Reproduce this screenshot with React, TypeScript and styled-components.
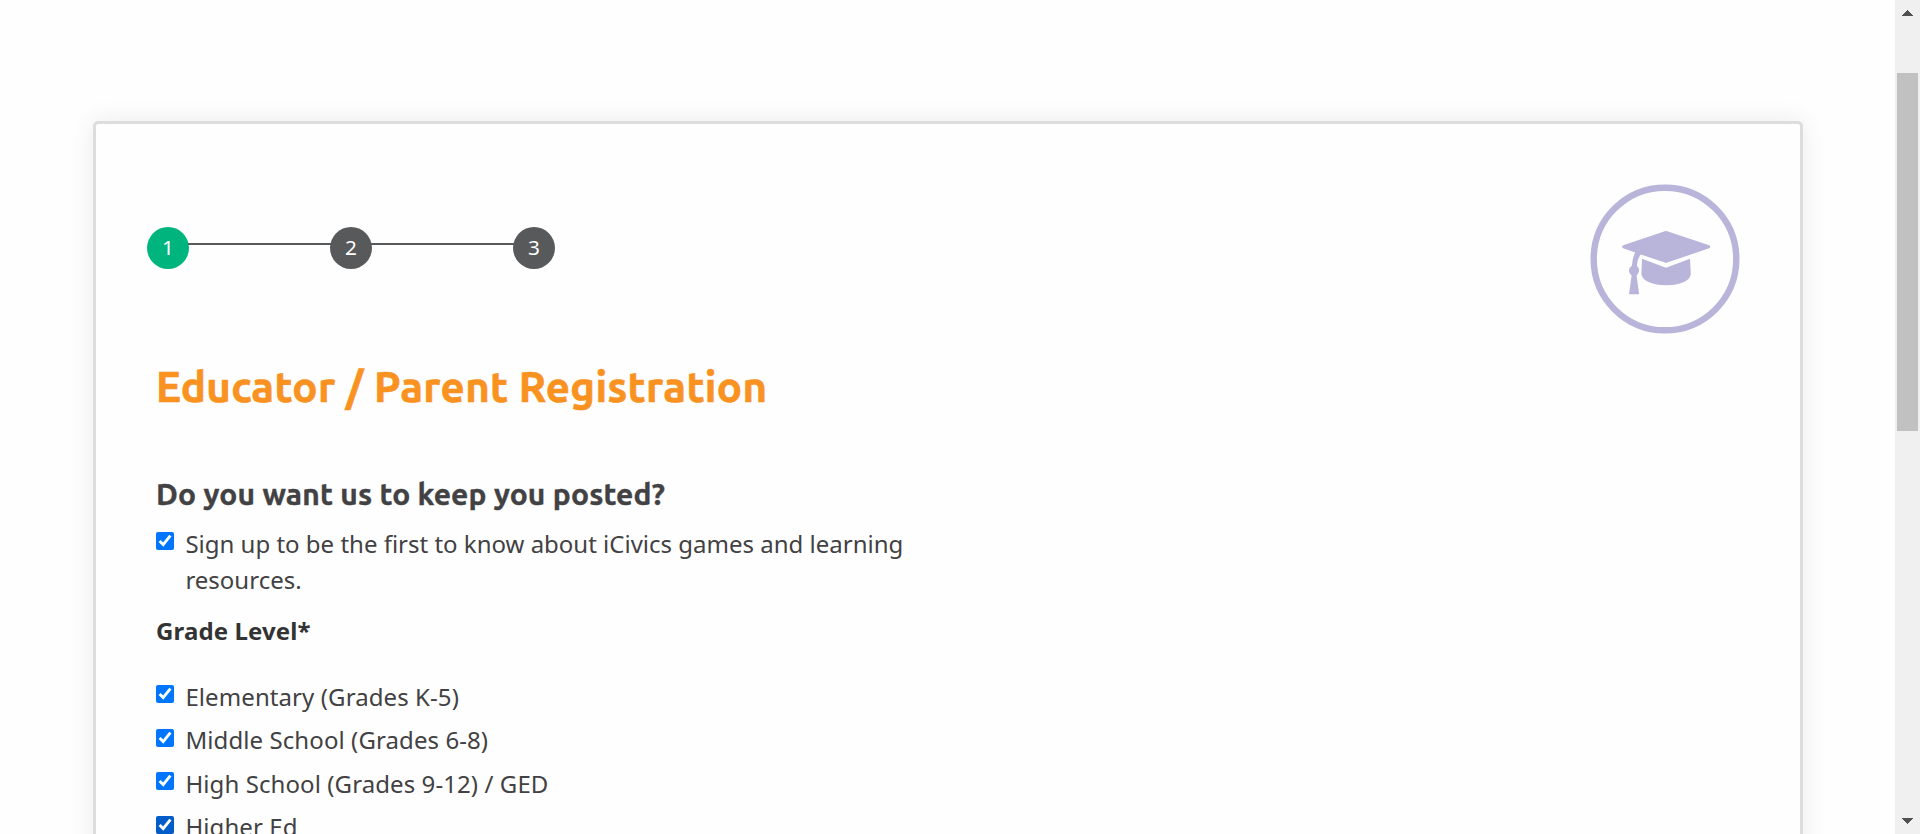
import React from "react";
import styled, { createGlobalStyle } from "styled-components";

const GlobalStyle = createGlobalStyle`
  *, *::before, *::after { box-sizing: border-box; }
  body { margin: 0; background: #fff; overflow: hidden; }
`;

const Viewport = styled.div`
  display: flex;
  height: 834px;
  overflow: hidden;
  background: #fefefe;
  color: #424143;
  font-family: "Noto Sans", sans-serif;
  font-size: 24px;
  line-height: 36px;
`;

const Page = styled.main`
  flex: 1;
  padding: 121px 92px 0 93px;
`;

const Card = styled.section`
  height: 900px;
  padding: 60px 60px 0;
  border: 3px solid #ddd;
  border-radius: 5px;
  background: #fefefe;
  box-shadow: 0 0 26px rgba(0, 0, 0, 0.08);
`;

const CardHeader = styled.header`
  display: flex;
  justify-content: space-between;
  height: 150px;
`;

const Steps = styled.ol`
  display: flex;
  margin: 43px 0 0 -9px;
  padding: 0;
  list-style: none;
`;

const Step = styled.li`
  display: flex;
`;

const StepDot = styled.span<{ $active?: boolean }>`
  width: 42px;
  height: 42px;
  border-radius: 50%;
  background: ${(p) => (p.$active ? "#00b47d" : "#58595b")};
  color: #fff;
  font-size: 20.8px;
  line-height: 40px;
  text-align: center;
`;

const StepLine = styled.span`
  width: 143px;
  height: 2px;
  margin: 16px -1px 0;
  background: #58595b;
`;

const Badge = styled.svg`
  width: 150px;
  height: 150px;
`;

const Title = styled.h1`
  margin: 26px 0 0;
  color: #f99221;
  font-family: Ubuntu, "Noto Sans", sans-serif;
  font-size: 42px;
  font-weight: 700;
  line-height: 54px;
  letter-spacing: 0.33px;
  -webkit-text-stroke: 0.6px currentColor;
  white-space: nowrap;
`;

const Subtitle = styled.h2`
  margin: 60px 0 0;
  font-family: Ubuntu, "Noto Sans", sans-serif;
  font-size: 30px;
  font-weight: 700;
  line-height: 40px;
  letter-spacing: 0.15px;
  -webkit-text-stroke: 0.4px currentColor;
  white-space: nowrap;
`;

const Option = styled.label`
  display: flex;
  align-items: flex-start;
  width: 780px;
`;

const OptionText = styled.span`
  flex: 1;
`;

const Checkbox = styled.input<{ $hovered?: boolean }>`
  flex: none;
  width: 18px;
  height: 18px;
  margin: 6px 11.4px 0 0;
  accent-color: ${(p) => (p.$hovered ? "#005cc8" : "#0075ff")};
`;

const Newsletter = styled.div`
  margin-top: 12px;
`;

const FieldLabel = styled.h3`
  margin: 15px 0 0;
  color: #333;
  font-size: 24px;
  font-weight: 700;
  line-height: 36px;
  letter-spacing: 0.13px;
`;

const Grades = styled.div`
  display: flex;
  flex-direction: column;
  gap: 7.5px;
  margin-top: 30px;
  letter-spacing: 0.09px;

  ${OptionText} {
    margin-top: -0.3px;
    margin-bottom: 0.3px;
  }
`;

const Scrollbar = styled.aside`
  display: flex;
  flex-direction: column;
  align-items: center;
  width: 25px;
  padding: 10px 0;
  background: #f0f0f0;
`;

const Arrow = styled.svg`
  display: block;
  flex: none;
  width: 11px;
  height: 6px;
`;

const Thumb = styled.div`
  width: 21px;
  height: 358px;
  margin: 57px 0 auto;
  background: #c1c1c1;
`;

const grades = [
  "Elementary (Grades K-5)",
  "Middle School (Grades 6-8)",
  "High School (Grades 9-12) / GED",
  "Higher Ed",
];

function GraduationBadge() {
  return (
    <Badge viewBox="0 0 150 150" fill="#b9b4da">
      <circle cx="75" cy="75" r="71.3" fill="none" stroke="#b9b4da" strokeWidth="6.4" />
      <path d="M33.2 61.2 74.8 47.3Q76 46.9 77.2 47.3L119.2 61.2Q121.4 62.8 119.2 64.3L77.2 78.6Q76 79 74.8 78.6L50.9 70.4Q47.6 73.5 46.9 81.8Q49.2 83.8 49.1 86.6Q48.8 89.8 46.6 91.4L49.1 110.3H39L41.6 91.4Q39 89.8 38.9 86.6Q38.9 83.8 41.9 81.8Q42.3 73.5 45.2 68.5L33.2 64.3Q31 62.8 33.2 61.2Z" />
      <path d="M52 74.7 76 83.7 100 74.7 100.8 90.5C99.8 97 90 101.2 76.4 101.2C62.5 101.2 52.6 97 51.4 90.5Z" />
    </Badge>
  );
}

function OptionRow({ text, hovered }: { text: string; hovered?: boolean }) {
  return (
    <Option>
      <Checkbox type="checkbox" defaultChecked $hovered={hovered} />
      <OptionText>{text}</OptionText>
    </Option>
  );
}

export default function App() {
  return (
    <>
      <GlobalStyle />
      <Viewport>
        <Page>
          <Card>
            <CardHeader>
              <Steps>
                {[1, 2, 3].map((n) => (
                  <Step key={n}>
                    <StepDot $active={n === 1}>{n}</StepDot>
                    {n < 3 && <StepLine />}
                  </Step>
                ))}
              </Steps>
              <GraduationBadge />
            </CardHeader>
            <Title>Educator / Parent Registration</Title>
            <Subtitle>Do you want us to keep you posted?</Subtitle>
            <Newsletter>
              <OptionRow text="Sign up to be the first to know about iCivics games and learning resources." />
            </Newsletter>
            <FieldLabel>Grade Level*</FieldLabel>
            <Grades>
              {grades.map((grade, i) => (
                <OptionRow key={grade} text={grade} hovered={i === 3} />
              ))}
            </Grades>
          </Card>
        </Page>
        <Scrollbar>
          <Arrow viewBox="0 0 11 6" shapeRendering="crispEdges">
            <path d="M5.5 0 11 6H0Z" fill="#505050" />
          </Arrow>
          <Thumb />
          <Arrow viewBox="0 0 11 6" shapeRendering="crispEdges">
            <path d="M5.5 6 11 0H0Z" fill="#505050" />
          </Arrow>
        </Scrollbar>
      </Viewport>
    </>
  );
}
